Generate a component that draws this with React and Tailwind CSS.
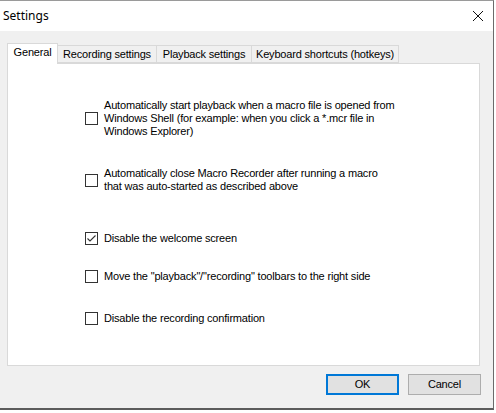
import { useState } from 'react'

const TABS = [
  { label: 'General', width: 'w-[51px]' },
  { label: 'Recording settings', width: 'w-[99px]' },
  { label: 'Playback settings', width: 'w-[95px]' },
  { label: 'Keyboard shortcuts (hotkeys)', width: 'w-[147px]' },
]

const OPTIONS = [
  {
    id: 'autoplay',
    lines: [
      'Automatically start playback when a macro file is opened from',
      'Windows Shell (for example: when you click a *.mcr file in',
      'Windows Explorer)',
    ],
    gap: 'mt-[35px]',
  },
  {
    id: 'autoclose',
    lines: [
      'Automatically close Macro Recorder after running a macro',
      'that was auto-started as described above',
    ],
    gap: 'mt-[29px]',
  },
  { id: 'welcome', lines: ['Disable the welcome screen'], gap: 'mt-[39px]', checked: true },
  { id: 'toolbars', lines: ['Move the "playback"/"recording" toolbars to the right side'], gap: 'mt-[25px]' },
  { id: 'confirm', lines: ['Disable the recording confirmation'], gap: 'mt-[29px]' },
]

function CheckBox({ checked, onChange }) {
  return (
    <button
      onClick={onChange}
      className="w-[13px] h-[13px] shrink-0 border border-[#333333] bg-white flex items-center justify-center"
    >
      {checked && (
        <svg width="11" height="11" viewBox="0 0 11 11" fill="none">
          <path d="M1.5 5.5 L4 8 L9.5 2.5" stroke="#333333" strokeWidth="1.1" />
        </svg>
      )}
    </button>
  )
}

export default function App() {
  const [tab, setTab] = useState(0)
  const [values, setValues] = useState(() =>
    Object.fromEntries(OPTIONS.map((o) => [o.id, !!o.checked]))
  )

  return (
    <div className="w-[496px] h-[413px] bg-white overflow-hidden font-['Liberation_Sans',Arial,sans-serif] text-[11px] tracking-[-0.18px] text-black">
      <div className="w-[494px] h-[410px] flex flex-col border-t border-r border-b-2 border-t-[#9a9a9a] border-r-[#6b6b6b] border-b-[#5c5c5c]">
        {/* title bar */}
        <div className="h-[30px] shrink-0 bg-white flex items-center justify-between pl-[3px] pr-[9px]">
          <span className="font-['Noto_Sans','Open_Sans',sans-serif] text-[12px] tracking-normal leading-none">Settings</span>
          <svg width="12" height="12" viewBox="0 0 12 12" fill="none">
            <path d="M1 1 L11 11 M11 1 L1 11" stroke="#111111" strokeWidth="1" />
          </svg>
        </div>

        {/* dialog body */}
        <div className="flex-1 bg-[#f0f0f0] flex flex-col pt-[12px] pl-[7px] pr-[13px]">
          <div className="flex items-end h-[20px] relative z-10">
            {TABS.map((t, i) =>
              i === tab ? (
                <button
                  key={t.label}
                  onClick={() => setTab(i)}
                  className={`${t.width} h-[21px] -mb-px bg-white border border-b-0 border-[#d9d9d9] flex items-start justify-center pt-[2px] leading-[13px]`}
                >
                  {t.label}
                </button>
              ) : (
                <button
                  key={t.label}
                  onClick={() => setTab(i)}
                  className={`${t.width} h-[18px] bg-[#f0f0f0] border border-l-0 border-[#d9d9d9] flex items-start justify-center pt-[2px] leading-[13px] whitespace-nowrap`}
                >
                  {t.label}
                </button>
              )
            )}
          </div>

          <div className="h-[303px] w-[473px] bg-white border border-[#d9d9d9] flex flex-col pl-[77px]">
            {tab === 0 &&
              OPTIONS.map((o) => (
                <div key={o.id} className={`${o.gap} flex items-center gap-[6px]`}>
                  <CheckBox
                    checked={values[o.id]}
                    onChange={() => setValues((v) => ({ ...v, [o.id]: !v[o.id] }))}
                  />
                  <div className="leading-[13px] whitespace-nowrap">
                    {o.lines.map((l) => (
                      <div key={l}>{l}</div>
                    ))}
                  </div>
                </div>
              ))}
          </div>

          <div className="flex justify-end gap-[9px] mt-[8px] -mr-px">
            <button className="w-[73px] h-[21px] bg-[#e1e1e1] border-2 border-[#0078d7] flex items-center justify-center leading-none">
              OK
            </button>
            <button className="w-[73px] h-[21px] bg-[#e1e1e1] border border-[#adadad] flex items-center justify-center leading-none">
              Cancel
            </button>
          </div>
        </div>
      </div>
    </div>
  )
}
